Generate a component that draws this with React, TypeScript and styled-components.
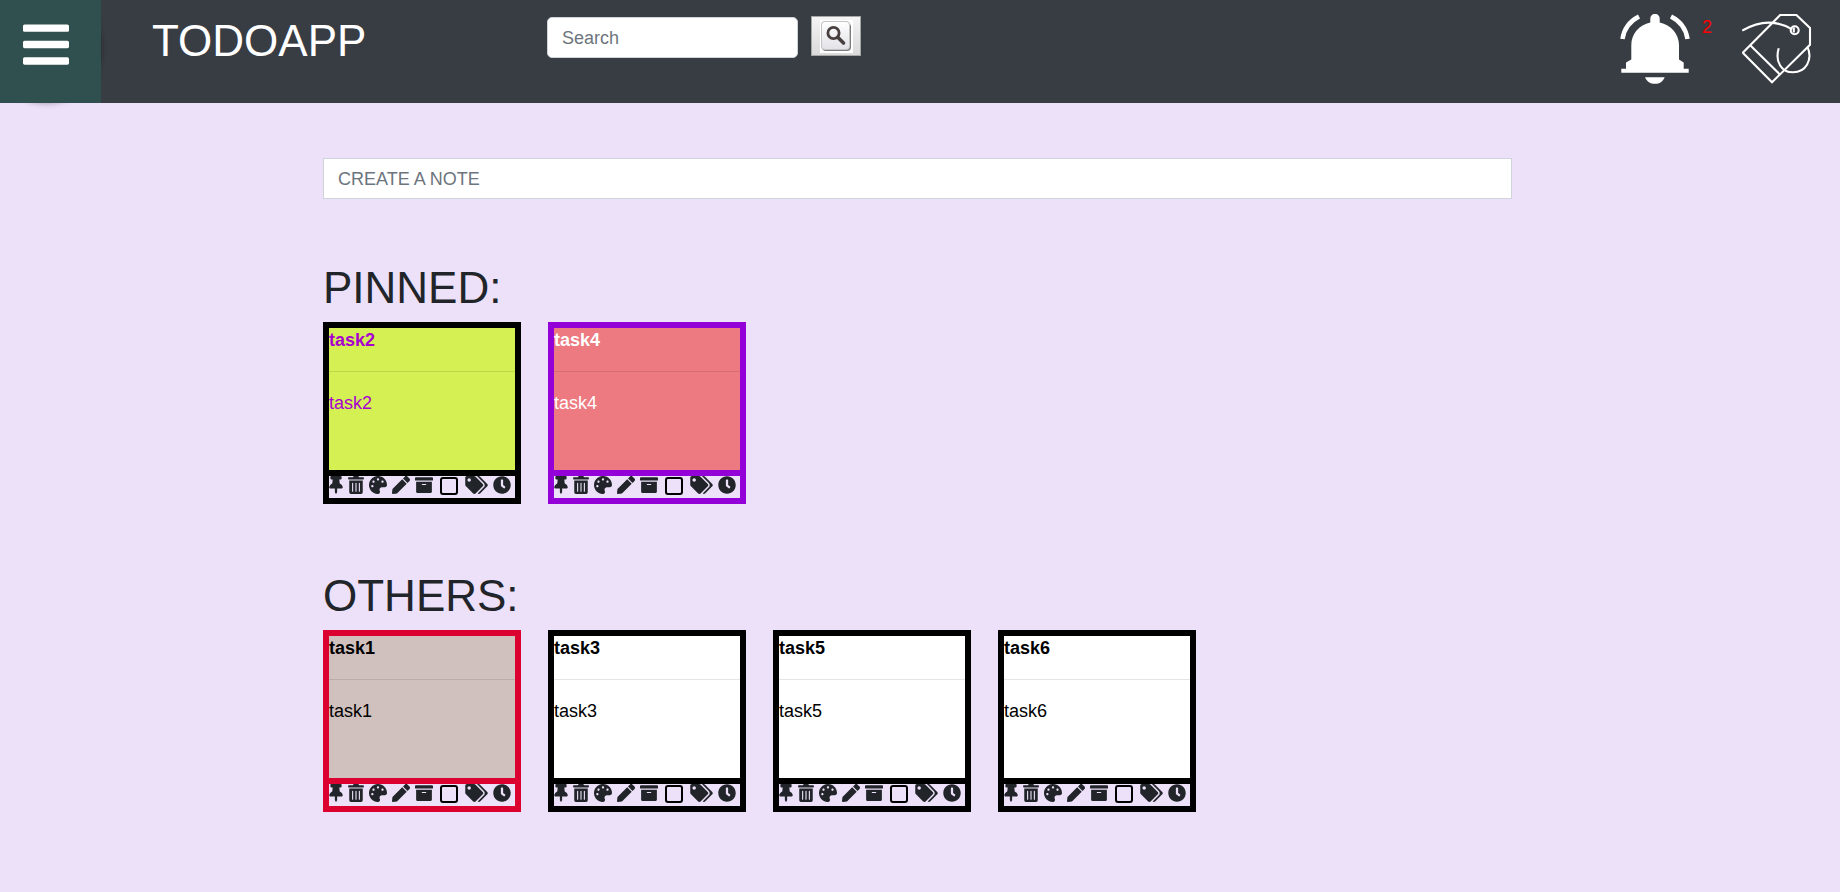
import React from "react";
import styled, { createGlobalStyle } from "styled-components";
import {
  FaArchive,
  FaBars,
  FaClock,
  FaPalette,
  FaPen,
  FaTags,
  FaThumbtack,
  FaTrashAlt,
} from "react-icons/fa";

const GlobalStyle = createGlobalStyle`
  *, *::before, *::after { box-sizing: border-box; }
  body {
    margin: 0;
    background: #ede0f9;
    color: #212529;
    font-family: "Liberation Sans", Arial, sans-serif;
    font-size: 18px;
    line-height: 24px;
  }
  button, input { font: inherit; }
`;

const Header = styled.header`
  display: grid;
  grid-template-columns: 101px 446px auto 1fr;
  align-items: start;
  height: 103px;
  background: #383c43;
`;

const MenuButton = styled.button`
  position: relative;
  z-index: 0;
  height: 103px;
  padding: 0;
  border: 0;
  background: none;
  color: #fff;
  cursor: pointer;

  &::before {
    content: "";
    position: absolute;
    z-index: -2;
    top: 2px;
    left: 0;
    width: 92px;
    height: 92px;
    border-radius: 50%;
    box-shadow: 0 0 10px 5px #000;
  }

  &::after {
    content: "";
    position: absolute;
    z-index: -1;
    inset: 0;
    background: #2f504f;
  }
`;

const MenuIcon = styled(FaBars)`
  display: block;
  width: 46px;
  height: 53px;
  margin: 0 0 14px 23px;
`;

const Brand = styled.h1`
  margin: 14px 0 0 51px;
  color: #fff;
  font-size: 44px;
  font-weight: 400;
  line-height: 54px;
`;

const SearchForm = styled.form`
  display: flex;
  align-items: flex-start;
  gap: 13px;
  padding-top: 16px;
`;

const TextInput = styled.input`
  display: block;
  width: 100%;
  height: 41px;
  padding: 2px 14px 0;
  border: 1px solid #ced4da;
  border-radius: 0;
  background: #fff;
  color: #495057;

  &::placeholder {
    color: #6c757d;
    opacity: 1;
  }
`;

const SearchInput = styled(TextInput)`
  width: 251px;
  margin-top: 1px;
  border-radius: 5px;
`;

const SearchButton = styled.button`
  display: grid;
  place-items: center;
  width: 50px;
  height: 40px;
  padding: 0;
  border: 1px solid #a6a6a6;
  background: linear-gradient(#f4f4f4, #dadada);
  cursor: pointer;
`;

const HeaderTools = styled.div`
  display: flex;
  justify-content: flex-end;
  align-items: flex-start;
  padding: 14px 28px 0 0;
`;

const IconLink = styled.a`
  display: block;
  width: 70px;
  height: 70px;
`;

const Count = styled.span`
  width: 52px;
  padding-left: 12px;
  color: #f00;
  line-height: 26px;
`;

const Main = styled.main`
  display: grid;
  grid-template-columns: 323px minmax(0, 1fr) 328px;
  padding: 55px 0 80px;

  & > * { grid-column: 2; }
`;

const Section = styled.section<{ $gap: number }>`
  margin-top: ${(p) => p.$gap}px;
`;

const Heading = styled.h2`
  margin: 0 0 7px;
  font-size: 44px;
  font-weight: 400;
  line-height: 54px;
`;

const Cards = styled.div`
  display: flex;
  flex-wrap: wrap;
  gap: 27px;
`;

const Card = styled.article<{ $edge: string }>`
  width: 198px;
  border: 6px solid ${(p) => p.$edge};
`;

const Note = styled.div<{ $fill: string; $ink: string; $edge: string }>`
  height: 148px;
  border-bottom: 6px solid ${(p) => p.$edge};
  background: ${(p) => p.$fill};
  color: ${(p) => p.$ink};
`;

const NoteTitle = styled.h3`
  height: 44px;
  margin: 0 0 19px;
  border-bottom: 1px solid rgba(0, 0, 0, 0.1);
  font-size: 18px;
  font-weight: 700;
`;

const NoteText = styled.p`
  margin: 0;
`;

const Actions = styled.div`
  display: flex;
  align-items: flex-start;
  gap: 5px;
  height: 22px;
`;

const Action = styled.button<{ $width: number }>`
  flex: none;
  padding: 0;
  border: 0;
  background: none;
  color: #212529;
  cursor: pointer;

  svg {
    display: block;
    width: ${(p) => p.$width}px;
    height: 18px;
  }
`;

const Tick = styled.input`
  flex: none;
  appearance: none;
  width: 18px;
  height: 18px;
  margin: 1px 2px 0;
  border: 2px solid #000;
  border-radius: 3px;
  cursor: pointer;

  &:checked { background: #000; }
`;

type Task = { name: string; fill: string; ink: string; edge: string };

const pinned: Task[] = [
  { name: "task2", fill: "#d4f053", ink: "#a800d0", edge: "#000" },
  { name: "task4", fill: "#ec7a80", ink: "#fff", edge: "#9400d8" },
];

const others: Task[] = [
  { name: "task1", fill: "#d0c0be", ink: "#000", edge: "#dc0030" },
  { name: "task3", fill: "#fff", ink: "#000", edge: "#000" },
  { name: "task5", fill: "#fff", ink: "#000", edge: "#000" },
  { name: "task6", fill: "#fff", ink: "#000", edge: "#000" },
];

function TaskCard({ name, fill, ink, edge }: Task) {
  return (
    <Card $edge={edge}>
      <Note $fill={fill} $ink={ink} $edge={edge}>
        <NoteTitle>{name}</NoteTitle>
        <NoteText>{name}</NoteText>
      </Note>
      <Actions>
        <Action $width={14} type="button" aria-label="Pin"><FaThumbtack /></Action>
        <Action $width={16} type="button" aria-label="Delete"><FaTrashAlt /></Action>
        <Action $width={18} type="button" aria-label="Colour"><FaPalette /></Action>
        <Action $width={18} type="button" aria-label="Edit"><FaPen /></Action>
        <Action $width={18} type="button" aria-label="Archive"><FaArchive /></Action>
        <Tick type="checkbox" aria-label={`Mark ${name} as done`} />
        <Action $width={23} type="button" aria-label="Labels"><FaTags /></Action>
        <Action $width={18} type="button" aria-label="Reminder"><FaClock /></Action>
      </Actions>
    </Card>
  );
}

function SearchKey() {
  return (
    <svg width="33" height="33" viewBox="0 0 33 33" aria-hidden="true">
      <defs>
        <linearGradient id="key" x1="0" y1="0" x2="0" y2="1">
          <stop offset="0" stopColor="#fff" />
          <stop offset="1" stopColor="#e2e2e8" />
        </linearGradient>
      </defs>
      <rect width="33" height="33" fill="#fff" />
      <rect x="2" y="3" width="29" height="28" rx="4" fill="#7c7c7c" />
      <rect x="1" y="1" width="29" height="29" rx="4" fill="#c4c4c4" />
      <rect x="2" y="2" width="27" height="27" rx="3" fill="url(#key)" />
      <circle cx="13.500" cy="13" r="5.600" fill="none" stroke="#483f3f" strokeWidth="2.800" />
      <path d="M18 17.500l5.500 5.500" stroke="#483f3f" strokeWidth="3.600" strokeLinecap="round" />
    </svg>
  );
}

function Bell() {
  return (
    <svg width="70" height="70" viewBox="0 0 70 70" fill="#fff" aria-hidden="true">
      <path d="M30.300 8.500V4.500a4.700 4.700 0 0 1 9.400 0V8.500C51 11 59 20 59 31V45.500L63.700 48.500V54.700H68.700V58.800H1.300V54.700H6V48.500L11.300 45.500V31C11.300 20 19 11 30.300 8.500Z" />
      <path d="M25 63.200H44.700C43 67.500 39.500 69.800 35 69.800S26.700 67.500 25 63.200Z" />
      <path d="M19 2.500C10.500 6.800 4 15 2.500 25M51 2.500C59.500 6.800 66 15 67.500 25" fill="none" stroke="#fff" strokeWidth="4.500" />
    </svg>
  );
}

function PriceTag() {
  return (
    <svg width="70" height="70" viewBox="0 0 70 70" fill="none" stroke="#fff" strokeWidth="2.100" aria-hidden="true">
      <path d="M38.200 1H54.400L68 14V30.700L30 68.300L.8 38.700Z" />
      <path d="M8.200 31.300L37.700 60.300" />
      <circle cx="52.700" cy="16.300" r="4" />
      <path d="M51.800 13.500v5" />
      <path d="M.2 16.700C15.700 7.500 31.700 4.500 50.200 15.300" />
      <path d="M36.700 34.300C32.700 48 39.700 58.300 51 58.300C63.700 58.300 71.200 46 65.400 32.700" />
    </svg>
  );
}

export default function App() {
  return (
    <>
      <GlobalStyle />
      <Header>
        <MenuButton type="button" aria-label="Menu"><MenuIcon /></MenuButton>
        <Brand>TODOAPP</Brand>
        <SearchForm role="search">
          <SearchInput type="search" aria-label="Search" placeholder="Search" />
          <SearchButton type="button" aria-label="Run search"><SearchKey /></SearchButton>
        </SearchForm>
        <HeaderTools>
          <IconLink href="#reminders" aria-label="Reminders"><Bell /></IconLink>
          <Count>2</Count>
          <IconLink href="#labels" aria-label="Labels"><PriceTag /></IconLink>
        </HeaderTools>
      </Header>
      <Main>
        <TextInput type="text" aria-label="Create a note" placeholder="CREATE A NOTE" />
        <Section $gap={62}>
          <Heading>PINNED:</Heading>
          <Cards>{pinned.map((t) => <TaskCard key={t.name} {...t} />)}</Cards>
        </Section>
        <Section $gap={65}>
          <Heading>OTHERS:</Heading>
          <Cards>{others.map((t) => <TaskCard key={t.name} {...t} />)}</Cards>
        </Section>
      </Main>
    </>
  );
}
